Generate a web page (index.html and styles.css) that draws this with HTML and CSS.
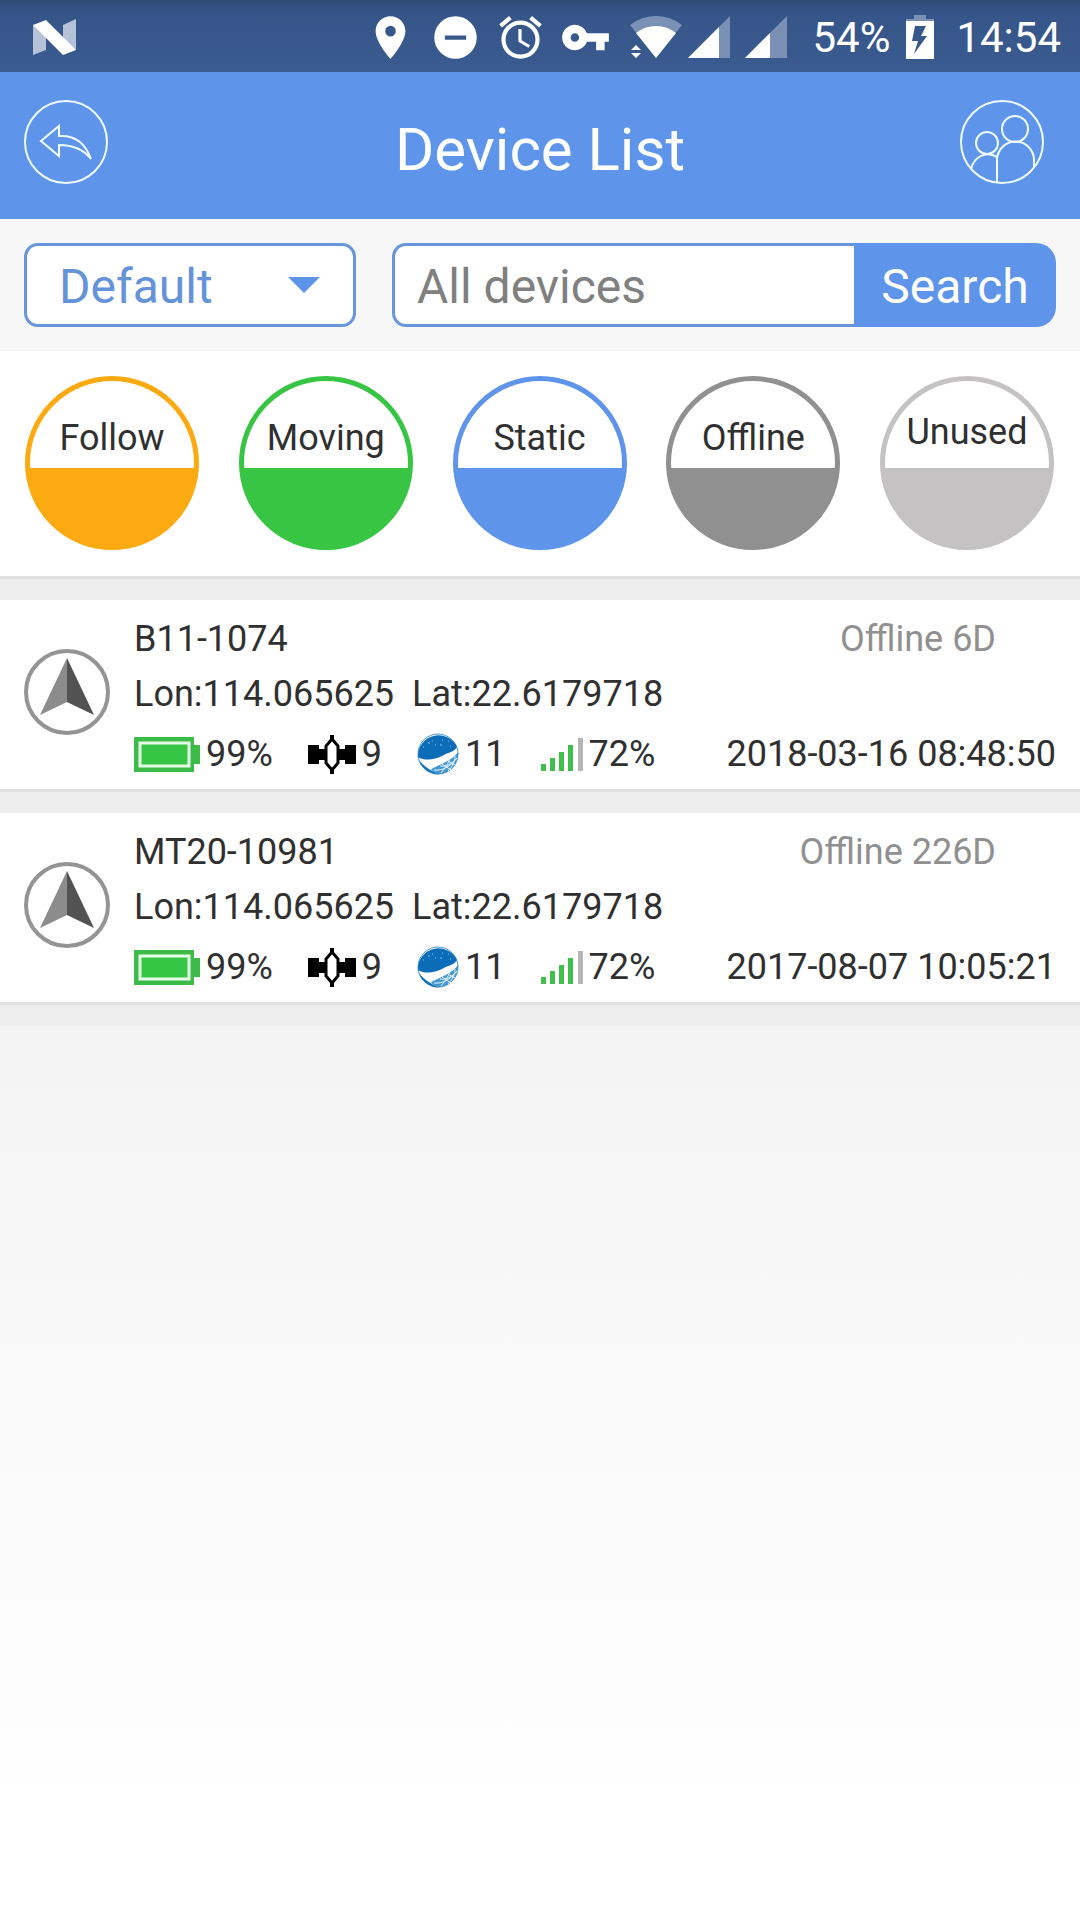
FILE: index.html
```html
<!DOCTYPE html>
<html lang="en">
<head>
<meta charset="utf-8">
<meta name="viewport" content="width=device-width, initial-scale=1">
<title>Device List</title>
<link rel="stylesheet" href="styles.css">
</head>
<body>
<svg class="sprite" aria-hidden="true">
  <symbol id="compass" viewBox="0 0 86 86">
    <circle cx="43" cy="43" r="41" fill="#fff" stroke="#949494" stroke-width="4"/>
    <path d="M43 9 16 66 43 53z" fill="#8c8c8c"/>
    <path d="M43 9 70 66 43 53z" fill="#525252"/>
  </symbol>
  <symbol id="battery" viewBox="0 0 66 35">
    <path d="M0 0H60V8H66V27H60V35H0z" fill="#3dbb49"/>
    <rect x="6" y="6" width="49" height="23" fill="#36c544" stroke="#e4fbe6" stroke-width="3"/>
  </symbol>
  <symbol id="satellite" viewBox="0 0 48 39">
    <path d="M0 10H11V14H18V25H11V29H0zM48 10H37V14H30V25H37V29H48z"/>
    <path d="M24 0V6M24 33V39" stroke="#000" stroke-width="4"/>
    <path d="M24 4 30 11V28L24 35 18 28V11z" fill="#fff" stroke="#000" stroke-width="3"/>
  </symbol>
  <symbol id="globe" viewBox="0 0 42 42">
    <circle cx="21" cy="21" r="20" fill="#fff" stroke="#4a9ad4" stroke-width="1"/>
    <path d="M1 24A20.500 20.500 0 0 1 40 14C36 20 31 19 25 23C17 27 8 28 1 24z" fill="#0b6cb8"/>
    <path d="M2 27C5 37 14 41 21 41.500C16 38 8 35 2 27z" fill="#1673bb"/>
    <path d="M14 36C22 32 36 27 41 19A20.500 20.500 0 0 1 21 41.500C18 40 16 39 14 36z" fill="#4597d2"/>
    <path d="M17 37C25 38 33 34 40 25M23 33C29 34 35 31 40 25M24 40C29 34 32 29 33 25M31 38C36 33 38 28 38 23M25 31 34 37M31 28 38 32" fill="none" stroke="#e6f5ff" stroke-width="1"/>
    <path d="M6 14h1M11 10h2M15 8h1M18 12h1M23 12h2M25 7h1M31 8h1M33 13h1" stroke="#8cc4ea" stroke-width="1"/>
  </symbol>
  <symbol id="signal" viewBox="0 0 42 33">
    <path d="M0 26H5V33H0zM9 20H14V33H9zM18 14H23V33H18zM27 7H32V33H27z" fill="#3fc04c"/>
    <path d="M37 0H42V33H37z" fill="#b5b5b5"/>
  </symbol>
</svg>

<div class="status-bar">
  <svg class="notification" viewBox="0 0 43 36" aria-hidden="true">
    <path d="M0 6V36L13 31V10zM30 6V30L43 31V0z" fill="#b6c2d8"/>
    <path d="M0 6 13 1 43 31 30 36z" fill="#fff"/>
  </svg>
  <div class="alerts" aria-hidden="true">
    <svg viewBox="0 0 24 24"><path d="M12 2C8.130 2 5 5.130 5 9c0 5.250 7 13 7 13s7-7.750 7-13c0-3.870-3.130-7-7-7zm0 9.500a2.500 2.500 0 1 1 0-5 2.500 2.500 0 0 1 0 5z"/></svg>
    <svg viewBox="0 0 24 24"><path d="M12 2a10 10 0 1 0 0 20 10 10 0 0 0 0-20zm5 11H7v-2h10v2z"/></svg>
    <svg viewBox="0 0 24 24"><path d="M22 5.720l-4.600-3.860-1.290 1.530 4.600 3.860L22 5.720zM7.880 3.390L6.600 1.860 2 5.710l1.290 1.530 4.590-3.850zM12.500 8H11v6l4.750 2.850.75-1.230-4-2.370V8zM12 4a9 9 0 1 0 0 18 9 9 0 0 0 0-18zm0 16a7 7 0 1 1 0-14 7 7 0 0 1 0 14z"/></svg>
    <svg viewBox="0 0 24 24"><path d="M12.650 10C11.830 7.670 9.610 6 7 6c-3.310 0-6 2.690-6 6s2.690 6 6 6c2.610 0 4.830-1.670 5.650-4H17v4h4v-4h2v-4H12.650zM7 14a2 2 0 1 1 0-4 2 2 0 0 1 0 4z"/></svg>
  </div>
  <svg class="wifi" viewBox="0 0 52 42" aria-hidden="true">
    <path d="M0 9A42 42 0 0 1 52 9L26 42z" fill="#7a90b5"/>
    <path d="M6 17A32 32 0 0 1 46 17L26 42z" fill="#fff"/>
    <path d="M6 27V42L16 30z" fill="#385989"/>
    <path d="M1 34 6 29 11 34zM1 37 6 42 11 37z" fill="#fff"/>
  </svg>
  <div class="cells" aria-hidden="true">
    <svg viewBox="0 0 42 42"><path d="M42 0V42H0z" fill="#7a90b5"/><path d="M31 11V42H0z" fill="#fff"/></svg>
    <svg viewBox="0 0 42 42"><path d="M42 0V42H0z" fill="#7a90b5"/><path d="M25 17V42H0z" fill="#fff"/></svg>
  </div>
  <span class="charge">54%</span>
  <svg class="charging" viewBox="0 0 28 44" aria-hidden="true">
    <path d="M8 0H20V4H28V7H0V4H8z" fill="#7a90b5"/>
    <path d="M0 6H28V44H0zM9 11 6 26H12L8 39 21 21H15L20 11z" fill="#fff" fill-rule="evenodd"/>
  </svg>
  <time>14:54</time>
</div>

<header class="app-bar">
  <button type="button" class="round" aria-label="Back">
    <svg viewBox="0 0 84 84" aria-hidden="true">
      <circle cx="42" cy="42" r="41"/>
      <path d="M17 41 35 26V36C50 35 61 42 67 59C60 50 50 45 35 45V56z"/>
    </svg>
  </button>
  <h1>Device List</h1>
  <button type="button" class="round" aria-label="Accounts">
    <svg viewBox="0 0 84 84" aria-hidden="true">
      <circle cx="42" cy="42" r="41"/>
      <circle cx="55" cy="29" r="13"/>
      <circle cx="27" cy="43" r="11"/>
      <path d="M37 83V60A18 18 0 0 1 74 60V68M11 69C14 57 26 50 37 57"/>
    </svg>
  </button>
</header>

<form class="filters">
  <div class="dropdown">
    <select aria-label="Group"><option>Default</option></select>
  </div>
  <div class="search">
    <input type="text" placeholder="All devices" aria-label="Search devices">
    <button type="submit">Search</button>
  </div>
</form>

<nav class="states" aria-label="Device state">
  <button type="button" class="state follow">Follow</button>
  <button type="button" class="state moving">Moving</button>
  <button type="button" class="state static">Static</button>
  <button type="button" class="state offline">Offline</button>
  <button type="button" class="state unused">Unused</button>
</nav>

<main>
  <article class="device">
    <svg class="compass" aria-hidden="true"><use href="#compass"/></svg>
    <div class="info">
      <div class="row"><h2>B11-1074</h2><span class="age">Offline 6D</span></div>
      <div class="row place"><span>Lon:114.065625</span><span>Lat:22.6179718</span></div>
      <div class="row metrics">
        <span class="metric power"><svg aria-hidden="true"><use href="#battery"/></svg>99%</span>
        <span class="metric gps"><svg aria-hidden="true"><use href="#satellite"/></svg>9</span>
        <span class="metric beidou"><svg aria-hidden="true"><use href="#globe"/></svg>11</span>
        <span class="metric gsm"><svg aria-hidden="true"><use href="#signal"/></svg>72%</span>
        <time>2018-03-16 08:48:50</time>
      </div>
    </div>
  </article>
  <article class="device">
    <svg class="compass" aria-hidden="true"><use href="#compass"/></svg>
    <div class="info">
      <div class="row"><h2>MT20-10981</h2><span class="age">Offline 226D</span></div>
      <div class="row place"><span>Lon:114.065625</span><span>Lat:22.6179718</span></div>
      <div class="row metrics">
        <span class="metric power"><svg aria-hidden="true"><use href="#battery"/></svg>99%</span>
        <span class="metric gps"><svg aria-hidden="true"><use href="#satellite"/></svg>9</span>
        <span class="metric beidou"><svg aria-hidden="true"><use href="#globe"/></svg>11</span>
        <span class="metric gsm"><svg aria-hidden="true"><use href="#signal"/></svg>72%</span>
        <time>2017-08-07 10:05:21</time>
      </div>
    </div>
  </article>
</main>
</body>
</html>
```
FILE: styles.css
```css
* {
  box-sizing: border-box;
}

body {
  --blue: #5e95ea;
  margin: 0;
  min-height: 100vh;
  display: flex;
  flex-direction: column;
  font-family: Roboto, sans-serif;
  font-size: 36px;
  color: #303030;
  background: #fff;
}

button, input, select {
  font: inherit;
  margin: 0;
}

button {
  padding: 0;
  cursor: pointer;
}

h1, h2 {
  margin: 0;
  font-weight: 400;
}

svg {
  display: block;
  flex: none;
}

.sprite {
  position: absolute;
  width: 0;
  height: 0;
}

/* System status bar */
.status-bar {
  display: flex;
  align-items: center;
  height: 72px;
  padding: 2px 19px 0 33px;
  font-size: 42px;
  color: #fff;
  background: linear-gradient(#2f4c77, #36568a 20%, #3a5b8f);
}

.notification {
  width: 43px;
  height: 36px;
}

.alerts {
  display: flex;
  gap: 14px;
  margin-left: auto;
  fill: #fff;
}

.alerts svg {
  width: 51px;
  height: 51px;
}

.wifi {
  width: 52px;
  height: 42px;
  margin: 0 6px 0 19px;
}

.cells {
  display: flex;
  gap: 15px;
}

.cells svg {
  width: 42px;
  height: 42px;
}

.charge {
  margin-left: 25px;
}

.charging {
  width: 28px;
  height: 44px;
  margin: 0 22px 0 16px;
}

/* Title bar */
.app-bar {
  display: grid;
  grid-template-columns: 1fr auto 1fr;
  align-items: start;
  height: 147px;
  padding: 28px 36px 0 24px;
  color: #fff;
  background: var(--blue);
}

.app-bar h1 {
  padding-left: 12px;
  font-size: 60px;
  line-height: 99px;
}

.round {
  border: 0;
  background: none;
}

.round:last-child {
  justify-self: end;
}

.round:first-child {
  justify-self: start;
}

.round svg {
  width: 84px;
  height: 84px;
  fill: none;
  stroke: #f0fdff;
  stroke-width: 2;
}

/* Filter form */
.filters {
  display: flex;
  gap: 36px;
  padding: 24px;
  font-size: 48px;
  background: #f7f7f7;
}

.dropdown {
  position: relative;
  flex: 1;
}

.dropdown::after {
  content: "";
  position: absolute;
  top: 34px;
  right: 36px;
  border: 16px solid transparent;
  border-top-color: var(--blue);
  border-bottom: 0;
  pointer-events: none;
}

.dropdown select {
  display: block;
  width: 100%;
  height: 84px;
  padding: 2px 32px 0;
  appearance: none;
  border: 3px solid #6796db;
  border-radius: 14px;
  color: #6593da;
  background: #fff;
}

.search {
  display: flex;
  flex: 2;
  min-width: 0;
  height: 84px;
}

.search input {
  flex: 1;
  width: 0;
  padding: 2px 22px 0;
  border: 3px solid #6796db;
  border-right: 0;
  border-radius: 14px 0 0 14px;
  background: #fff;
}

.search input::placeholder {
  color: #808080;
  opacity: 1;
}

.search button {
  width: 202px;
  padding-top: 2px;
  border: 0;
  border-radius: 0 20px 20px 0;
  color: #fff;
  background: var(--blue);
}

/* State shortcuts */
.states {
  display: flex;
  justify-content: space-between;
  padding: 25px 26px 26px 25px;
  border-bottom: 3px solid #e0e0e0;
  background: #fff;
}

.state {
  width: 174px;
  height: 174px;
  padding-bottom: 50px;
  border: 5px solid var(--tone);
  border-radius: 50%;
  color: #303030;
  background: linear-gradient(#fff 87px, var(--tone) 87px);
}

.follow { --tone: #fcaa11; }
.moving { --tone: #38c543; }
.static { --tone: #5e95ea; }
.offline { --tone: #909090; }
.unused { --tone: #c4c2c3; padding-bottom: 62px; }

/* Device list */
main {
  flex: 1;
  background: linear-gradient(#ededed 447px, #f4f4f4 447px, #fff 1250px);
}

.device {
  display: flex;
  align-items: flex-start;
  gap: 24px;
  height: 192px;
  padding: 11px 24px 0;
  border-bottom: 3px solid #e0e0e0;
  background: #fff;
}

.device:first-child {
  margin: 21px 0;
}

.compass {
  width: 86px;
  height: 86px;
  margin-top: 38px;
}

.info {
  flex: 1;
}

.row {
  display: flex;
  align-items: center;
  height: 55px;
}

.row h2 {
  font-size: 36px;
}

.age {
  margin: 0 60px 0 auto;
  color: #909090;
}

.place {
  gap: 18px;
}

.metrics {
  height: 66px;
}

.metric {
  display: flex;
  align-items: center;
  gap: 6px;
  margin-right: 35px;
}

.power svg {
  width: 66px;
  height: 35px;
}

.gps svg {
  width: 48px;
  height: 39px;
}

.beidou svg {
  width: 42px;
  height: 42px;
}

.gsm svg {
  width: 42px;
  height: 33px;
}

.metrics .metric:last-of-type {
  margin-right: 0;
}

.metrics time {
  margin-left: auto;
}
```
